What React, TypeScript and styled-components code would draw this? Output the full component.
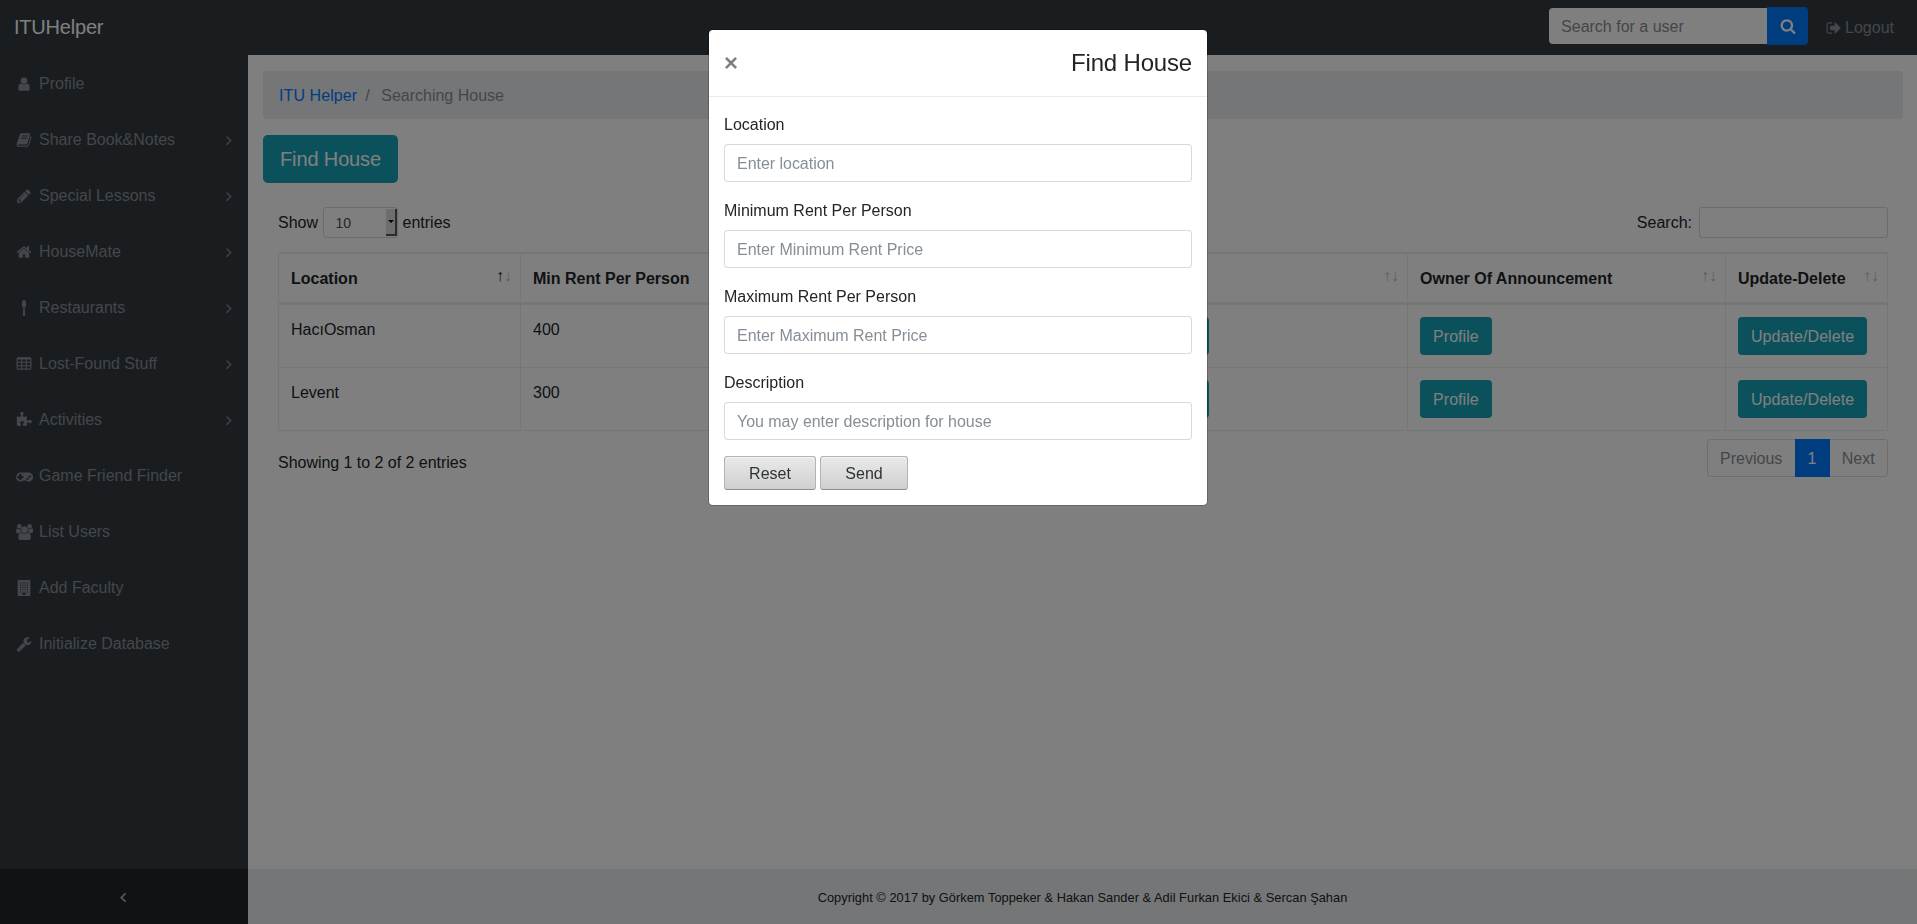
import React from "react";
import styled, { createGlobalStyle } from "styled-components";

const GlobalStyle = createGlobalStyle`
  *, *::before, *::after { box-sizing: border-box; }
  body {
    margin: 0;
    font-family: "Liberation Sans", Arial, sans-serif;
    font-size: 16px;
    line-height: 1.5;
    color: #212529;
    background: #fff;
    overflow: hidden;
  }
  button, input { font-family: inherit; }
`;

/* ---------- icons ---------- */

type Glyph = { d: string; w?: number };

const cells = (xs: number[], ys: number[], w: number, h: number) =>
  ys.map((y) => xs.map((x) => `M${x} ${y}h${w}v${h}h-${w}z`).join("")).join("");

const glyphs: Record<string, Glyph> = {
  user: {
    d: "M1536 1399q0 109-62.5 187t-150.5 78h-854q-88 0-150.5-78t-62.5-187q0-85 8.5-160.5t31.5-152 58.5-131 94-89 134.5-34.5q131 128 313 128t313-128q76 0 134.5 34.5t94 89 58.5 131 31.5 152 8.5 160.5zm-256-887q0 159-112.5 271.5t-271.5 112.5-271.5-112.5-112.5-271.5 112.5-271.5 271.5-112.5 271.5 112.5 112.5 271.5z",
  },
  book: {
    d: "M1703 478q40 57 18 129l-275 906q-19 64-76.5 107.5t-122.5 43.5h-923q-77 0-148.5-53.5t-99.5-131.5q-24-67-2-127 0-4 3-27t4-37q1-8-3-21.5t-3-19.5q2-11 8-21t16.5-23.5 16.5-23.5q23-38 45-91.5t30-91.5q3-10 .5-30t-.5-28q3-11 17-28t17-23q21-36 42-92t25-90q1-9-2.5-32t.5-28q4-13 22-30.5t22-22.5q19-26 42.5-84.5t27.5-96.5q1-8-3-25.5t-2-26.5q2-8 9-18t18-23 17-21q8-12 16.5-30.5t15-35 16-36 19.5-32 26.5-23.5 36-11.5 47.5 5.5l-1 3q38-9 51-9h761q74 0 114 56t18 130l-274 906q-36 119-71.5 153.5t-128.5 34.5h-869q-27 0-38 15-11 16-1 43 24 70 144 70h923q29 0 56-15.5t35-41.5l300-987q7-22 5-57 38 15 59 43zm-1064 2q-4 13 2 22.5t20 9.5h608q13 0 25.5-9.5t16.5-22.5l21-64q4-13-2-22.5t-20-9.5h-608q-13 0-25.5 9.5t-16.5 22.5zm-83 256q-4 13 2 22.5t20 9.5h608q13 0 25.5-9.5t16.5-22.5l21-64q4-13-2-22.5t-20-9.5h-608q-13 0-25.5 9.5t-16.5 22.5z",
  },
  pencil: {
    d: "M491 1536l91-91-235-235-91 91v107h128v128h107zm523-928q0-22-22-22-10 0-17 7l-542 542q-7 7-7 17 0 22 22 22 10 0 17-7l542-542q7-7 7-17zm-54-192l416 416-832 832h-416v-416zm683 96q0 53-37 90l-166 166-416-416 166-165q36-38 90-38 53 0 91 38l235 234q37 39 37 91z",
  },
  home: {
    d: "M1472 992v480q0 26-19 45t-45 19h-384v-384h-256v384h-384q-26 0-45-19t-19-45v-480q0-1 .5-3t.5-3l575-474 575 474q1 2 1 6zm223-69l-62 74q-8 9-21 11h-3q-13 0-21-7l-692-577-692 577q-12 8-24 7-13-2-21-11l-62-74q-8-10-7-23.5t11-21.5l719-599q32-26 76-26t76 26l244 204v-195q0-14 9-23t23-9h192q14 0 23 9t9 23v408l219 182q10 8 11 21.5t-7 23.5z",
  },
  spoon: {
    d: "M1152 500q0 120-48 204t-116 118q-14 8-12 24l44 786q2 64-37 112t-87 48-87-48-37-112l44-786q2-16-12-24-68-34-116-118t-48-204q0-190 74-345t182-155 182 155 74 345z",
  },
  table: {
    d:
      "M1728 288v1088q0 66-47 113t-113 47h-1344q-66 0-113-47t-47-113v-1088q0-66 47-113t113-47h1344q66 0 113 47t47 113z" +
      cells([192, 704, 1216], [384, 768, 1152], 384, 256),
  },
  puzzle: {
    d: "M1755 1083q0 81-44.5 135t-123.5 54q-41 0-77.5-17.5t-59-38-56.5-38-71-17.5q-110 0-110 124 0 39 16 115t15 115v5q-22 0-33 1-34 3-97.5 11.5t-115.5 13.5-98 5q-61 0-103-26.5t-42-83.5q0-37 17.5-71t38-56.5 38-59 17.5-77.5q0-79-54-123.5t-135-44.5q-84 0-143 45.5t-59 127.5q0 43 15 83t33.5 64.5 33.5 53 15 50.5q0 45-46 89-37 35-117 35-95 0-245-24-9-2-27.5-4t-27.5-4l-13-2q-1 0-3-1-2 0-2-1v-1024q2 1 17.5 3.5t34 5 21.5 3.5q150 24 245 24 80 0 117-35 46-44 46-89 0-22-15-50.5t-33.5-53-33.5-64.5-15-83q0-82 59-127.5t144-45.5q80 0 134 44.5t54 123.5q0 41-17.5 77.5t-38 59-38 56.5-17.5 71q0 57 42 83.5t103 26.5q64 0 180-15t163-17v2q-1 2-3.5 17.5t-5 34-3.5 21.5q-24 150-24 245 0 80 35 117 44 46 89 46 22 0 50.5-15t53-33.5 64.5-33.5 83-15q82 0 127.5 59t45.5 143z",
  },
  gamepad: {
    w: 1920,
    d: "M832 1120v-192q0-14-9-23t-23-9h-192v-192q0-14-9-23t-23-9h-192q-14 0-23 9t-9 23v192h-192q-14 0-23 9t-9 23v192q0 14 9 23t23 9h192v192q0 14 9 23t23 9h192q14 0 23-9t9-23v-192h192q14 0 23-9t9-23zm576 96q0-53-37.5-90.5t-90.5-37.5-90.5 37.5-37.5 90.5 37.5 90.5 90.5 37.5 90.5-37.5 37.5-90.5zm256-256q0-53-37.5-90.5t-90.5-37.5-90.5 37.5-37.5 90.5 37.5 90.5 90.5 37.5 90.5-37.5 37.5-90.5zm256 64q0 212-150 362t-362 150q-192 0-338-128h-220q-146 128-338 128-212 0-362-150t-150-362 150-362 362-150h896q212 0 362 150t150 362z",
  },
  users: {
    w: 1920,
    d: "M593 896q-162 5-265 128h-134q-82 0-138-40.5t-56-118.5q0-353 124-353 6 0 43.5 21t97.5 42.5 119 21.5q67 0 133-23-5 37-5 66 0 159 93 293zm1071 637q0 120-73 189.5t-194 69.5h-874q-121 0-194-69.5t-73-189.5q0-53 3.5-103.5t14-109 26.5-108.5 43-97.5 62-81 85.5-53.5 111.5-20q10 0 43 21.5t73 48 107 48 135 21.5 135-21.5 107-48 73-48 43-21.5q61 0 111.5 20t85.5 53.5 62 81 43 97.5 26.5 108.5 14 109 3.5 103.5zm-1024-1277q0 106-75 181t-181 75-181-75-75-181 75-181 181-75 181 75 75 181zm704 384q0 159-112.5 271.5t-271.5 112.5-271.5-112.5-112.5-271.5 112.5-271.5 271.5-112.5 271.5 112.5 112.5 271.5zm576 225q0 78-56 118.5t-138 40.5h-134q-103-123-265-128 93-134 93-293 0-29-5-66 66 23 133 23 59 0 119-21.5t97.5-42.5 43.5-21q124 0 124 353zm-128-609q0 106-75 181t-181 75-181-75-75-181 75-181 181-75 181 75 75 181z",
  },
  building: {
    d:
      "M1536 0q26 0 45 19t19 45v1664q0 26-19 45t-45 19h-1280q-26 0-45-19t-19-45v-1664q0-26 19-45t45-19z" +
      cells([448, 704, 960, 1216], [256, 512, 768, 1024], 128, 128) +
      cells([448, 1216], [1280], 128, 128) +
      "M704 1408h384v256h-384z",
  },
  wrench: {
    d: "M448 1472q0-26-19-45t-45-19-45 19-19 45 19 45 45 19 45-19 19-45zm644-420l-682 682q-37 37-90 37-52 0-91-37l-106-108q-38-36-38-90 0-53 38-91l681-681q39 98 114.5 173.5t173.5 114.5zm634-435q0 39-23 106-47 134-164.5 217.5t-258.5 83.5q-185 0-316.5-131.5t-131.5-316.5 131.5-316.5 316.5-131.5q58 0 121.5 16.5t107.5 46.5q16 11 16 28t-16 28l-293 169v224l193 107q5-3 79-48.5t135.5-81 70.5-35.5q15 0 23.5 10t8.5 25z",
  },
  signOut: {
    d: "M704 1440q0 4 1 20t.5 26.5-3 23.5-10 19.5-20.5 6.5h-320q-119 0-203.5-84.5t-84.5-203.5v-704q0-119 84.5-203.5t203.5-84.5h320q13 0 22.5 9.5t9.5 22.5q0 4 1 20t.5 26.5-3 23.5-10 19.5-20.5 6.5h-320q-66 0-113 47t-47 113v704q0 66 47 113t113 47h312l11.5 1 11.5 3 8 5.5 7 9 2 13.5zm928-544q0 26-19 45l-544 544q-19 19-45 19t-45-19-19-45v-288h-448q-26 0-45-19t-19-45v-384q0-26 19-45t45-19h448v-288q0-26 19-45t45-19 45 19l544 544q19 19 19 45z",
  },
  search: {
    d: "M1216 832q0-185-131.5-316.5t-316.5-131.5-316.5 131.5-131.5 316.5 131.5 316.5 316.5 131.5 316.5-131.5 131.5-316.5zm512 832q0 52-38 90t-90 38q-54 0-90-38l-343-342q-179 124-399 124-143 0-273.5-55.5t-225-150-150-225-55.5-273.5 55.5-273.5 150-225 225-150 273.5-55.5 273.5 55.5 225 150 150 225 55.5 273.5q0 220-124 399l343 343q37 37 37 90z",
  },
  angleRight: {
    d: "M1171 960q0 13-10 23l-466 466q-10 10-23 10t-23-10l-50-50q-10-10-10-23t10-23l393-393-393-393q-10-10-10-23t10-23l50-50q13-10 23-10t23 10l466 466q10 10 10 23z",
  },
  angleLeft: {
    d: "M1203 544q0 13-10 23l-393 393 393 393q10 10 10 23t-10 23l-50 50q-10 10-23 10t-23-10l-466-466q-10-10-10-23t10-23l466-466q10-10 23-10t23 10l50 50q10 10 10 23z",
  },
};

const Svg = styled.svg<{ $bold?: boolean }>`
  display: block;
  flex: none;
  fill: currentColor;
  fill-rule: evenodd;
  stroke: ${(p) => (p.$bold ? "currentColor" : "none")};
  stroke-width: 70;
`;

function Icon({ name, size = 16, bold }: { name: string; size?: number; bold?: boolean }) {
  const g = glyphs[name];
  const w = g.w ?? 1792;
  return (
    <Svg $bold={bold} width={(size * w) / 1792} height={size} viewBox={`0 0 ${w} 1792`}>
      <path d={g.d} />
    </Svg>
  );
}

/* ---------- shell ---------- */

const Page = styled.div`
  display: flex;
  flex-direction: column;
  width: 100vw;
  height: 100vh;
  overflow: hidden;
`;

const Navbar = styled.header`
  flex: none;
  display: flex;
  align-items: center;
  height: 55px;
  padding: 0 23px 3px 14px;
  background: #343a40;
`;

const Brand = styled.a`
  margin-right: auto;
  padding-top: 2px;
  font-size: 20px;
  line-height: 30px;
  letter-spacing: -0.2px;
  color: #fff;
`;

const UserSearch = styled.form`
  display: flex;
  align-items: center;
  margin: 0 18px 0 0;
`;

const UserSearchInput = styled.input`
  width: 218px;
  height: 36px;
  padding: 2px 12px 0;
  border: 0;
  border-radius: 4px 0 0 4px;
  font-size: 16px;
  background: #fff;
  &::placeholder { color: #868e96; opacity: 1; }
`;

const UserSearchButton = styled.button`
  display: flex;
  align-items: center;
  justify-content: center;
  width: 41px;
  height: 38px;
  padding: 0 0 0 1px;
  border: 0;
  border-radius: 0 4px 4px 0;
  color: #fff;
  background: #007bff;
`;

const Logout = styled.a`
  display: flex;
  align-items: center;
  gap: 3px;
  padding-top: 4px;
  color: #868e96;
`;

const Body = styled.div`
  flex: 1;
  display: flex;
  min-height: 0;
`;

const Sidebar = styled.nav`
  flex: none;
  display: flex;
  flex-direction: column;
  width: 248px;
  background: #343a40;
`;

const NavItem = styled.a`
  display: flex;
  align-items: center;
  height: 56px;
  padding: 2px 11px 0 14px;
  color: #868e96;
`;

const NavIcon = styled.span`
  display: flex;
  justify-content: center;
  width: 20.6px;
  margin-right: 4.4px;
`;

const NavArrow = styled.span`
  margin-left: auto;
`;

const SidebarToggle = styled.button`
  display: flex;
  align-items: center;
  justify-content: center;
  height: 55px;
  margin-top: auto;
  padding: 1px 2px 0 0;
  border: 0;
  color: #adb5bd;
  background: #212529;
`;

const Main = styled.main`
  flex: 1;
  display: flex;
  flex-direction: column;
  min-width: 0;
`;

const Content = styled.div`
  flex: 1;
  padding: 16px 14px 0 15px;
`;

const Footer = styled.footer`
  flex: none;
  height: 55px;
  line-height: 57px;
  font-size: 12.8px;
  letter-spacing: 0.04px;
  text-align: center;
  background: #e9ecef;
`;

/* ---------- content ---------- */

const Breadcrumb = styled.div`
  display: flex;
  height: 48px;
  margin-bottom: 16px;
  padding: 13px 16px 11px;
  border-radius: 4px;
  color: #868e96;
  background: #e9ecef;
`;

const Crumb = styled.a`
  letter-spacing: 0.08px;
  color: #007bff;
`;

const Divider = styled.span`
  padding: 0 11.6px 0 8px;
`;

const TealButton = styled.button<{ $large?: boolean; $width?: number }>`
  display: block;
  height: ${(p) => (p.$large ? 48 : 38)}px;
  width: ${(p) => (p.$width ? `${p.$width}px` : "auto")};
  padding: ${(p) => (p.$large ? "0 17px" : "2px 13px 0")};
  border: 0;
  border-radius: ${(p) => (p.$large ? 4.8 : 4)}px;
  font-size: ${(p) => (p.$large ? 20 : 16)}px;
  letter-spacing: ${(p) => (p.$large ? "-0.13px" : "0.07px")};
  color: #fff;
  background: #17a2b8;
  white-space: nowrap;
`;

const TableArea = styled.section`
  margin: 24px 15px 0;
`;

const Toolbar = styled.div`
  display: flex;
  align-items: center;
  height: 31px;
  margin-bottom: 14px;
`;

const Select = styled.span`
  display: flex;
  justify-content: space-between;
  width: 75px;
  height: 31px;
  margin: 0 5px 0 4.5px;
  padding: 1px 0 1px 12px;
  border: 1px solid rgba(0, 0, 0, 0.15);
  border-radius: 3.2px;
  font-size: 14px;
  line-height: 28px;
  color: #495057;
`;

const SelectHandle = styled.span`
  display: flex;
  align-items: center;
  justify-content: center;
  width: 11px;
  border: solid #5a5a5a;
  border-width: 0 2px 2px 0;
  background: #dcdcdc;
  &::after {
    content: "";
    margin-left: 1px;
    border: 3px solid transparent;
    border-top-color: #000;
    border-bottom: 0;
  }
`;

const FilterLabel = styled.label`
  display: flex;
  align-items: center;
  gap: 7px;
  margin-left: auto;
`;

const FilterInput = styled.input`
  width: 189px;
  height: 31px;
  border: 1px solid rgba(0, 0, 0, 0.15);
  border-radius: 3.2px;
  background: #fff;
`;

const Table = styled.table`
  width: 100%;
  table-layout: fixed;
  border: 1px solid #e9ecef;
  border-collapse: separate;
  border-spacing: 0;
`;

const Th = styled.th`
  padding: 13px 8px 11px 12px;
  border: solid #e9ecef;
  border-width: 1px 1px 2px 0;
  text-align: left;
  &:last-child { border-right-width: 0; }
`;

const ThInner = styled.div`
  display: flex;
  justify-content: space-between;
  height: 24px;
  white-space: nowrap;
`;

const Sort = styled.span`
  display: flex;
  margin-top: -3px;
`;

const SortArrow = styled.span<{ $active?: boolean }>`
  width: 8px;
  font-weight: 400;
  opacity: ${(p) => (p.$active ? 1 : 0.3)};
`;

const Td = styled.td<{ $text?: boolean }>`
  height: 63px;
  padding: ${(p) => (p.$text ? "13px 12px 11px" : "12px")};
  border: solid #e9ecef;
  border-width: 1px 1px 0 0;
  vertical-align: top;
  &:last-child { border-right-width: 0; }
`;

const TableFooter = styled.div`
  display: flex;
  justify-content: space-between;
  align-items: flex-start;
  margin-top: 8px;
`;

const Info = styled.div`
  padding-top: 12px;
  letter-spacing: -0.03px;
`;

const Pager = styled.div`
  display: flex;
  height: 38px;
`;

const PageLink = styled.a<{ $active?: boolean; $edge?: "left" | "right" }>`
  padding: 1px ${(p) => (p.$active ? 13 : 12.3)}px 0;
  line-height: ${(p) => (p.$active ? 38 : 36)}px;
  border: ${(p) => (p.$active ? "0" : "1px solid #ddd")};
  border-${(p) => (p.$edge === "left" ? "right" : "left")}-width: 0;
  border-radius: ${(p) =>
    p.$edge === "left" ? "4px 0 0 4px" : p.$edge === "right" ? "0 4px 4px 0" : "0"};
  color: ${(p) => (p.$active ? "#fff" : "#868e96")};
  background: ${(p) => (p.$active ? "#007bff" : "#fff")};
  height: 38px;
`;

/* ---------- dialog ---------- */

const Backdrop = styled.div`
  position: fixed;
  inset: 0;
  display: flex;
  justify-content: center;
  align-items: flex-start;
  padding-top: 29px;
  background: rgba(0, 0, 0, 0.5);
`;

const Dialog = styled.div`
  width: 500px;
  margin-right: 1px;
  border: 1px solid rgba(0, 0, 0, 0.2);
  border-radius: 4.8px;
  background: #fff;
  background-clip: padding-box;
`;

const DialogHeader = styled.div`
  display: flex;
  justify-content: space-between;
  align-items: center;
  height: 67px;
  padding: 0 15px;
  border-bottom: 1px solid #e9ecef;
`;

const Close = styled.button`
  padding: 0;
  border: 0;
  background: none;
  font-size: 24px;
  font-weight: 700;
  line-height: 24px;
  color: #000;
  opacity: 0.5;
`;

const DialogTitle = styled.h4`
  margin: 0;
  font-size: 24px;
  font-weight: 400;
  line-height: 36px;
  letter-spacing: -0.18px;
`;

const DialogBody = styled.form`
  margin: 0;
  padding: 15px;
`;

const Field = styled.label`
  display: flex;
  flex-direction: column;
  gap: 8px;
  margin-bottom: 16px;
`;

const FieldName = styled.span`
  height: 24px;
  padding-top: 1px;
`;

const TextInput = styled.input`
  height: 38px;
  padding: 2px 12px 0;
  border: 1px solid rgba(0, 0, 0, 0.15);
  border-radius: 4px;
  font-size: 16px;
  letter-spacing: -0.03px;
  background: #fff;
  &::placeholder { color: #868e96; opacity: 1; }
`;

const Actions = styled.div`
  display: flex;
  gap: 4px;
`;

const ActionButton = styled.button<{ $width: number }>`
  width: ${(p) => p.$width}px;
  height: 34px;
  padding: 1px 0 0;
  border: 1px solid #b4b4b4;
  border-bottom-color: #8c8c8c;
  border-radius: 3px;
  font-size: 16px;
  color: #2e3436;
  background: linear-gradient(#e9e9e9, #d0d0cf);
  box-shadow: inset 0 1px 0 #f3f3f3;
`;

/* ---------- data ---------- */

const navItems: { icon: string; label: string; more?: boolean }[] = [
  { icon: "user", label: "Profile" },
  { icon: "book", label: "Share Book&Notes", more: true },
  { icon: "pencil", label: "Special Lessons", more: true },
  { icon: "home", label: "HouseMate", more: true },
  { icon: "spoon", label: "Restaurants", more: true },
  { icon: "table", label: "Lost-Found Stuff", more: true },
  { icon: "puzzle", label: "Activities", more: true },
  { icon: "gamepad", label: "Game Friend Finder" },
  { icon: "users", label: "List Users" },
  { icon: "building", label: "Add Faculty" },
  { icon: "wrench", label: "Initialize Database" },
];

const columns = [
  { label: "Location", width: 242, sorted: true },
  { label: "Min Rent Per Person", width: 280 },
  { label: "", width: 300 },
  { label: "", width: 307 },
  { label: "Owner Of Announcement", width: 318 },
  { label: "Update-Delete", width: 161 },
];

const houses = [
  { location: "HacıOsman", rent: 400 },
  { location: "Levent", rent: 300 },
];

const fields = [
  { label: "Location", hint: "Enter location" },
  { label: "Minimum Rent Per Person", hint: "Enter Minimum Rent Price" },
  { label: "Maximum Rent Per Person", hint: "Enter Maximum Rent Price" },
  { label: "Description", hint: "You may enter description for house" },
];

export default function App() {
  return (
    <>
      <GlobalStyle />
      <Page>
        <Navbar>
          <Brand>ITUHelper</Brand>
          <UserSearch>
            <UserSearchInput placeholder="Search for a user" />
            <UserSearchButton type="button" aria-label="Search">
              <Icon name="search" />
            </UserSearchButton>
          </UserSearch>
          <Logout>
            <Icon name="signOut" />
            Logout
          </Logout>
        </Navbar>
        <Body>
          <Sidebar>
            {navItems.map((item) => (
              <NavItem key={item.label}>
                <NavIcon>
                  <Icon name={item.icon} />
                </NavIcon>
                {item.label}
                {item.more && (
                  <NavArrow>
                    <Icon name="angleRight" />
                  </NavArrow>
                )}
              </NavItem>
            ))}
            <SidebarToggle aria-label="Collapse">
              <Icon name="angleLeft" bold />
            </SidebarToggle>
          </Sidebar>
          <Main>
            <Content>
              <Breadcrumb>
                <Crumb>ITU Helper</Crumb>
                <Divider>/</Divider>
                Searching House
              </Breadcrumb>
              <TealButton $large>Find House</TealButton>
              <TableArea>
                <Toolbar>
                  Show
                  <Select>
                    10
                    <SelectHandle />
                  </Select>
                  entries
                  <FilterLabel>
                    Search:
                    <FilterInput />
                  </FilterLabel>
                </Toolbar>
                <Table>
                  <colgroup>
                    {columns.map((c, i) => (
                      <col key={i} width={c.width} />
                    ))}
                  </colgroup>
                  <thead>
                    <tr>
                      {columns.map((c, i) => (
                        <Th key={i}>
                          <ThInner>
                            <span>{c.label}</span>
                            <Sort>
                              <SortArrow $active={c.sorted}>↑</SortArrow>
                              <SortArrow>↓</SortArrow>
                            </Sort>
                          </ThInner>
                        </Th>
                      ))}
                    </tr>
                  </thead>
                  <tbody>
                    {houses.map((h) => (
                      <tr key={h.location}>
                        <Td $text>{h.location}</Td>
                        <Td $text>{h.rent}</Td>
                        <Td />
                        <Td>
                          <TealButton $width={96} />
                        </Td>
                        <Td>
                          <TealButton>Profile</TealButton>
                        </Td>
                        <Td>
                          <TealButton>Update/Delete</TealButton>
                        </Td>
                      </tr>
                    ))}
                  </tbody>
                </Table>
                <TableFooter>
                  <Info>Showing 1 to 2 of 2 entries</Info>
                  <Pager>
                    <PageLink $edge="left">Previous</PageLink>
                    <PageLink $active>1</PageLink>
                    <PageLink $edge="right">Next</PageLink>
                  </Pager>
                </TableFooter>
              </TableArea>
            </Content>
            <Footer>
              Copyright © 2017 by Görkem Toppeker &amp; Hakan Sander &amp; Adil Furkan Ekici &amp;
              Sercan Şahan
            </Footer>
          </Main>
        </Body>
      </Page>
      <Backdrop>
        <Dialog role="dialog">
          <DialogHeader>
            <Close aria-label="Close">×</Close>
            <DialogTitle>Find House</DialogTitle>
          </DialogHeader>
          <DialogBody>
            {fields.map((f) => (
              <Field key={f.label}>
                <FieldName>{f.label}</FieldName>
                <TextInput placeholder={f.hint} />
              </Field>
            ))}
            <Actions>
              <ActionButton type="button" $width={92}>
                Reset
              </ActionButton>
              <ActionButton type="button" $width={88}>
                Send
              </ActionButton>
            </Actions>
          </DialogBody>
        </Dialog>
      </Backdrop>
    </>
  );
}
